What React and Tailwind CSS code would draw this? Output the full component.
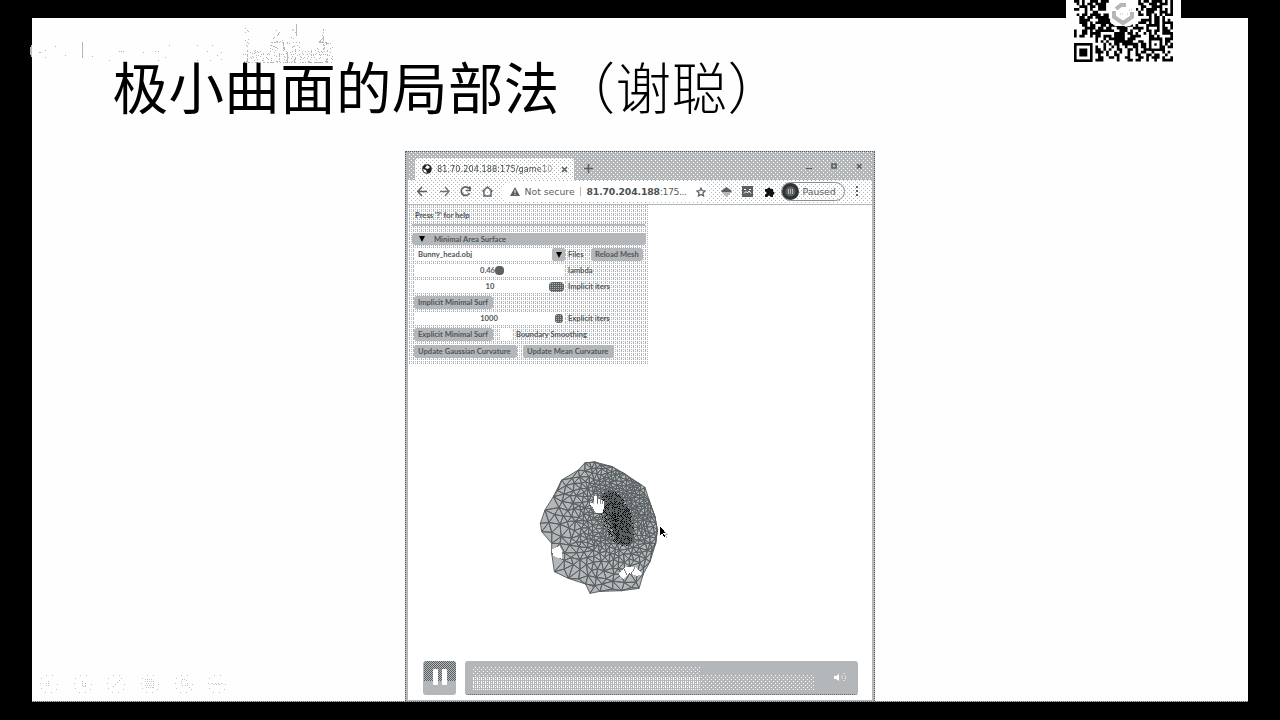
import React from "react";

const LIGHT = "#b3b7ba";
const DARK = "#5b6063";

function rng(seed) {
  let s = seed;
  return () => {
    s = (s * 1664525 + 1013904223) % 4294967296;
    return s / 4294967296;
  };
}

/* ---------- QR code ---------- */
const QR = [
  "##.#..###.###........##.#.##.####.#.#",
  ".#.#.##.####.........##.##..###.###.#",
  "..###.##.###.........##..##..####...#",
  "##..#.#..###..........##.#.####.#.#.#",
  "....#..##.............#.#..###..###.#",
  ".#.##.####.##........#..##.##.#.#.###",
  "..##.##.#####.........#.....#.##.#...",
  "..####...######......##..####.##.#.#.",
  "..###.#.######.##....#..###.#.##.####",
  "...##.##..##.######.##.#...#####.#..#",
  "....####.##.##..####..####.#...#.##.#",
  "#..##.#.#######..###.#..#..##.##.###.",
  "#..##.####.....####.##.#..#.#.#..####",
  "#.##..#.##.###.####..####...##.#....#",
  "........#..#.######.###.....#####.###",
  "#######.#.#.#..#######..##..#...#.##.",
  "#.....#....#.#.##.######.##.#.#.#.#.#",
  "#.###.#.#..#..#.#..#..##.##.#...##.##",
  "#.###.#.##.#.#..##..##.#..#####.##...",
  "#.###.#.###.#..#.#..#..#.##..#...#.#.",
  "#.....#..#..#..##...#..##..##.##..#..",
  "#######..##..##.#..##...##.#.###.#..#",
  "........###.....#...##.##..#..#..####",
];

function QrCode() {
  const u = 99 / 37;
  const cells = [];
  QR.forEach((row, r) => {
    row.split("").forEach((c, x) => {
      if (x < 8 && r > 14) return;
      if (c === "#") cells.push(`M${x * u} ${r * u}h${u}v${u}h${-u}z`);
    });
  });
  return (
    <svg width="99" height="62" viewBox="0 0 99 62" className="block">
      <path d={cells.join("")} fill="#000" />
      <rect x="0" y="42.5" width="21" height="20" fill="#fff" />
      <rect x="1.3" y="44.3" width="16" height="16.4" fill="none" stroke="#000" strokeWidth="2.6" />
      <rect x="5.3" y="48.5" width="8" height="8" fill="#000" />
      <rect x="75" y="38" width="13" height="13" fill="#fff" />
      <rect x="76.2" y="39.2" width="10.6" height="10.6" fill="none" stroke="#000" strokeWidth="2.5" />
      <rect x="80.3" y="43.3" width="2.4" height="2.4" fill="#000" />
      <path d="M37 0H62V22L56 26H41L36 22z" fill="#fff" />
      <path d="M52 5L47 5L42 9" fill="none" stroke={LIGHT} strokeWidth="4" />
      <path d="M40 11v6l9 6 9-6v-5" fill="none" stroke={LIGHT} strokeWidth="4" />
      <path d="M46 14h3M55 10h4M53 14h2" stroke={LIGHT} strokeDasharray="1 1" />
    </svg>
  );
}

/* ---------- Mesh ---------- */
const OUTLINE = [
  [180, 38], [210, 36], [262, 50], [300, 72], [360, 112], [372, 150], [390, 200], [397, 240],
  [392, 280], [375, 335], [355, 372], [342, 415], [290, 422], [225, 424], [195, 430], [182, 402],
  [130, 385], [88, 365], [80, 310], [80, 280], [50, 245], [46, 220], [60, 180], [85, 140], [110, 90], [160, 60],
];

function inside([x, y]) {
  let hit = false;
  for (let i = 0, j = OUTLINE.length - 1; i < OUTLINE.length; j = i++) {
    const [xi, yi] = OUTLINE[i];
    const [xj, yj] = OUTLINE[j];
    if (yi > y !== yj > y && x < ((xj - xi) * (y - yi)) / (yj - yi) + xi) hit = !hit;
  }
  return hit;
}

function circum(a, b, c) {
  const d = 2 * (a[0] * (b[1] - c[1]) + b[0] * (c[1] - a[1]) + c[0] * (a[1] - b[1]));
  const A = a[0] ** 2 + a[1] ** 2, B = b[0] ** 2 + b[1] ** 2, C = c[0] ** 2 + c[1] ** 2;
  const x = (A * (b[1] - c[1]) + B * (c[1] - a[1]) + C * (a[1] - b[1])) / d;
  const y = (A * (c[0] - b[0]) + B * (a[0] - c[0]) + C * (b[0] - a[0])) / d;
  return [x, y, (a[0] - x) ** 2 + (a[1] - y) ** 2];
}

function triangulate(points) {
  const p = [...points, [-2000, -2000], [3000, -2000], [200, 4000]];
  const n = points.length;
  let tris = [{ v: [n, n + 1, n + 2], c: circum(p[n], p[n + 1], p[n + 2]) }];
  for (let i = 0; i < n; i++) {
    const edges = new Map();
    const keep = [];
    for (const t of tris) {
      if ((p[i][0] - t.c[0]) ** 2 + (p[i][1] - t.c[1]) ** 2 < t.c[2]) {
        for (const [a, b] of [[0, 1], [1, 2], [2, 0]]) {
          const e = [t.v[a], t.v[b]].sort((m, k) => m - k);
          const key = e.join();
          if (edges.has(key)) edges.set(key, null);
          else edges.set(key, e);
        }
      } else keep.push(t);
    }
    edges.forEach((e) => {
      if (e) keep.push({ v: [e[0], e[1], i], c: circum(p[e[0]], p[e[1]], p[i]) });
    });
    tris = keep;
  }
  return tris.filter((t) => t.v.every((k) => k < n)).map((t) => t.v.map((k) => p[k]));
}

function buildMesh() {
  const rand = rng(17);
  const pts = OUTLINE.map(([x, y]) => [x + rand() * 0.1, y + rand() * 0.1]);
  for (let k = 0; k < 7000; k++) {
    const q = [45 + rand() * 352, 36 + rand() * 394];
    if (!inside(q)) continue;
    const dist = Math.hypot(q[0] - 290, (q[1] - 185) / 1.25);
    const gap = 6 + dist * 0.045 + Math.max(0, 190 - q[0]) * 0.07 + Math.max(0, q[1] - 270) * 0.05;
    if (pts.every((s) => Math.hypot(s[0] - q[0], s[1] - q[1]) > gap)) pts.push(q);
  }
  return triangulate(pts)
    .filter((t) => inside([(t[0][0] + t[1][0] + t[2][0]) / 3, (t[0][1] + t[1][1] + t[2][1]) / 3]))
    .map((t) => `M${t.map((q) => q.map((z) => z.toFixed(1)).join(" ")).join("L")}Z`)
    .join("");
}

const MESH = buildMesh();

function speckle(seed, count, test, w, h) {
  const rand = rng(seed);
  let d = "";
  for (let i = 0; i < count; i++) {
    const x = Math.floor(rand() * w);
    const y = Math.floor(rand() * h);
    if (test(x, y)) d += `M${x} ${y}h1v1h-1z`;
  }
  return d;
}

const CORE = speckle(
  5, 14000,
  (x, y) => {
    const cx = 91 + (y - 65) * 0.25;
    const r = Math.hypot((x - cx) / 15, (y - 68) / 28);
    return r < 1 && ((x + y) % 2 === 0 || (r < 0.45 && x % 3 === 0));
  },
  150, 155
);

function Mesh() {
  return (
    <svg width="150" height="155" viewBox="0 0 150 155" className="block" shapeRendering="crispEdges">
      <g transform="scale(0.33333)">
        <path d={MESH} fill={LIGHT} stroke={DARK} strokeWidth="3" strokeLinejoin="round" />
        <path d="M80 298L104 288L112 306L110 326L98 324L84 316z" fill="#fff" />
        <path d="M282 372L300 352L330 350L354 372L336 378L314 370L296 388z" fill="#fff" />
        <path d="M296 354L306 374M316 376L330 352M190 404L206 410" stroke={DARK} strokeWidth="2.5" />
      </g>
      <path d="M77 43l9-2 8 4 5 9 6 9 3 14 1 12-4 7-9-1-6-8-5-14-4-12-3-9z" fill={DARK} />
      <path d={CORE} fill="#000" />
      <path
        d="M69 46h2l1 1v6h1v-4h2v1h2v1h2v7l-2 5h-6l-3-5-3-4v-1h2l2 2V47z"
        fill="#fff"
      />
      <path d="M72 50v4M75 50v4M77 51v3" stroke={DARK} strokeWidth="0.7" />
      <path d="M135 77v8l2-2 2 4 1-1-2-3h3z" fill="#000" />
      <path d="M139 81l3 3h-2l2 4" stroke={LIGHT} fill="none" />
    </svg>
  );
}

/* ---------- Slide decorations ---------- */
const MARKS = speckle(
  9, 2600,
  (x, y) => {
    if (y > 23) return (x * 7 + y * 3 + ((x * y) >> 2)) % 4 === 0;
    const peak = Math.min(Math.abs(x - 34), Math.abs(x - 50), Math.abs(x - 81));
    if (x < 6) return x > 1 && (x * 3 + y) % 4 < 1;
    return peak < y / 2.6 && (x * 3 + y * 5 + ((x * y) >> 3)) % 5 === 0;
  },
  91, 37
);

function Watermark() {
  return (
    <svg width="310" height="42" viewBox="0 0 310 42" className="block" shapeRendering="crispEdges">
      <path d="M1 21h1v12h-1zM0 23h1v8h-1z" fill={LIGHT} />
      <path
        d="M9 28h2v1h-2zM15 26h1v1h-1zM15 33h1v1h-1zM25 22h1v1h-1zM35 31h1v1h-1zM52 18h1v16h-1zM62 32h1v1h-1zM79 36h1v1h-1zM89 27h1v1h-1zM91 27h1v1h-1zM93 27h1v1h-1zM113 28h1v1h-1zM125 27h1v1h-1zM128 27h1v1h-1zM128 36h1v1h-1zM135 33h1v1h-1zM139 21h1v1h-1zM167 21h1v1h-1zM167 36h1v1h-1zM177 27h1v1h-1zM180 36h1v1h-1zM182 21h1v1h-1zM187 31h1v1h-1zM191 28h1v1h-1zM191 35h1v1h-1z"
        fill={LIGHT}
      />
      <path d={MARKS} transform="translate(213 2)" fill={LIGHT} />
      <path d="M266 0h1v12h-1zM257 28h1v10h-1z" fill={LIGHT} />
    </svg>
  );
}

function SlideTool({ children }) {
  return (
    <svg width="20" height="20" viewBox="0 0 20 20" className="block" fill="none" stroke={LIGHT} strokeWidth="0.8" shapeRendering="crispEdges">
      <circle cx="10" cy="10" r="9" strokeDasharray="1 4.6" />
      {children}
    </svg>
  );
}

function SlideTools() {
  return (
    <div className="flex gap-[13.7px]">
      <SlideTool><path d="M9.500 7v6M7 9.500h1M7 11.500h1" strokeDasharray="1 1" /></SlideTool>
      <SlideTool><path d="M9.500 7v5M12.500 9v3M10 12.500h3" strokeDasharray="1 1" /></SlideTool>
      <SlideTool><path d="M7 13l9-9" strokeDasharray="1.400 1.400" /></SlideTool>
      <SlideTool><path d="M5 5.500h7M5 7.500h9M6 9.500h6M5 11.500h9M6 13.500h8M13.500 7v8" strokeDasharray="1 1" /></SlideTool>
      <SlideTool><path d="M7 10V6l3-1 3 2v4l3 3M8 11h4" strokeDasharray="1 1.500" /></SlideTool>
      <SlideTool><path d="M5 9.500h10M6 10.500h9" strokeDasharray="1 2" /></SlideTool>
    </div>
  );
}

/* ---------- Browser window ---------- */
function Chip({ className, children }) {
  return (
    <div className={`flex h-[13px] items-center rounded-[3px] bg-[#b3b7ba] pl-[4px] whitespace-nowrap ${className}`}>
      {children}
    </div>
  );
}

function Caret() {
  return <span className="h-0 w-0 border-x-[3.5px] border-t-[6px] border-x-transparent border-t-black" />;
}

function SidePanel() {
  return (
    <div className="h-[159px] w-[241px] bg-white bg-[conic-gradient(at_1px_1px,#b3b7ba_25%,transparent_0),conic-gradient(at_3px_1px,#b3b7ba_25%,transparent_0)] bg-[length:2px_2px,4px_4px] bg-[position:0_0,2px_1px] px-1 font-['Lato',sans-serif] text-[7.6px] leading-[13px] font-bold text-[#4f5457]">
      <div className="h-[21px] border-b-2 border-[#b3b7ba] pt-[4px] pl-[3px]">Press '?' for help</div>
      <div className="mt-[7px] mr-[-1px] flex h-[12px] items-center rounded-[3px] bg-[#b3b7ba] pl-[7px]">
        <Caret />
        <span className="ml-[9px]">Minimal Area Surface</span>
      </div>
      <div className="mt-[3px] flex flex-col gap-[3.1px] pl-[2px]">
        <div className="flex items-center">
          <div className="flex h-[13px] w-[138px] items-center bg-white pl-1">Bunny_head.obj</div>
          <div className="flex h-[13px] w-[13px] items-center justify-center rounded-[2px] bg-[#b3b7ba]">
            <Caret />
          </div>
          <span className="ml-[3px] w-[23px]">Files</span>
          <Chip className="w-[52px]">Reload Mesh</Chip>
        </div>
        <div className="flex items-center">
          <div className="flex h-[13px] w-[151px] items-center bg-white pl-[66px]">
            0.46<span className="h-[9px] w-[9px] rounded-[4px] bg-[#5b6063]" />
          </div>
          <span className="ml-[3px]">lambda</span>
        </div>
        <div className="flex items-center">
          <div className="flex h-[13px] w-[151px] items-center bg-white">
            <span className="w-[135px] pl-[17px] text-center">10</span>
            <span className="h-[10px] w-[15px] rounded-[4px] bg-[conic-gradient(#5b6063_25%,#b3b7ba_0_50%,#5b6063_0)] bg-[length:2px_2px]" />
          </div>
          <span className="ml-[3px]">Implicit iters</span>
        </div>
        <Chip className="w-[79px]">Implicit Minimal Surf</Chip>
        <div className="flex items-center">
          <div className="flex h-[13px] w-[151px] items-center bg-white">
            <span className="w-[141px] pl-[9px] text-center">1000</span>
            <span className="h-[9px] w-[8px] rounded-[3px] bg-[conic-gradient(#5b6063_25%,#b3b7ba_0_50%,#5b6063_0)] bg-[length:2px_2px]" />
          </div>
          <span className="ml-[3px]">Explicit iters</span>
        </div>
        <div className="flex items-center">
          <Chip className="w-[79px]">Explicit Minimal Surf</Chip>
          <span className="ml-[7px] h-[13px] w-[12px] rounded-[3px] bg-white" />
          <span className="ml-[4px]">Boundary Smoothing</span>
        </div>
        <div className="flex gap-[6px]">
          <Chip className="w-[103px]">Update Gaussian Curvature</Chip>
          <Chip className="w-[91px]">Update Mean Curvature</Chip>
        </div>
      </div>
    </div>
  );
}

function Globe() {
  return (
    <svg width="10" height="10" viewBox="0 0 10 10" className="shrink-0">
      <circle cx="5" cy="5" r="4.8" fill="#202325" />
      <path d="M5 1L8 3L6 5L3 4zM1 5L4 6L5 9L2 8z" fill="#fff" />
    </svg>
  );
}

function TabStrip() {
  return (
    <div className="flex h-[28px] bg-[#b3b7ba] bg-[conic-gradient(at_3px_1px,white_25%,transparent_0),conic-gradient(at_3px_1px,white_25%,transparent_0)] bg-[length:4px_4px] bg-[position:0_0,2px_2px] pt-[6px] pl-[7px]">
      <div className="flex h-[22px] w-[159px] items-center rounded-t-[4px] bg-white bg-[conic-gradient(at_3px_1px,#b3b7ba_25%,transparent_0),conic-gradient(at_3px_1px,#b3b7ba_25%,transparent_0)] bg-[length:4px_4px] bg-[position:0_0,2px_2px] pl-[7px] font-['DejaVu_Sans',sans-serif] text-[8.2px] text-[#4b5053]">
        <Globe />
        <span className="ml-[5px] w-[121px] bg-linear-to-r from-[#3f4447] from-82% to-[#c5c8ca] to-98% bg-clip-text tracking-[0.03px] whitespace-nowrap text-transparent">81.70.204.188:175/game10</span>
        <svg width="7" height="7" viewBox="0 0 7 7" className="ml-[3px] shrink-0" stroke={DARK} strokeWidth="1.700"><path d="M1 1l5 5M6 1l-5 5" /></svg>
      </div>
      <svg width="9" height="9" viewBox="0 0 9 9" className="mt-[6px] ml-[10px]" stroke={DARK} strokeWidth="1.600"><path d="M0 4.500h9M4.500 0v9" /></svg>
      <div className="mt-[4px] mr-[9px] ml-auto flex h-[8px] gap-[19px]">
        <svg width="6" height="8" viewBox="0 0 6 8"><path d="M0 6.500h6" stroke={DARK} /></svg>
        <svg width="6" height="8" viewBox="0 0 6 8"><path d="M1 2h4v4H1z" stroke={DARK} strokeWidth="1.600" fill={LIGHT} /></svg>
        <svg width="7" height="8" viewBox="0 0 7 8"><path d="M1 2l4.500 4.500M5.500 2L1 6.500" stroke={DARK} strokeWidth="1.700" /></svg>
      </div>
    </div>
  );
}

function Toolbar() {
  return (
    <div className="flex h-[25px] items-center border-b border-[#b3b7ba] bg-white bg-[conic-gradient(at_3px_1px,#b3b7ba_25%,transparent_0),conic-gradient(at_3px_1px,#b3b7ba_25%,transparent_0)] bg-[length:4px_4px] bg-[position:0_0,2px_2px] pb-px pl-[9px] font-['DejaVu_Sans',sans-serif] text-[9.3px] text-[#5b6063]">
      <div className="flex gap-[10.5px]">
        <svg width="11" height="11" viewBox="0 0 11 11" fill="none" stroke={DARK} strokeWidth="1.500"><path d="M10 5.500H1M5 1L.8 5.500 5 10" /></svg>
        <svg width="11" height="11" viewBox="0 0 11 11" fill="none" stroke="#6f7477" strokeWidth="1.300"><path d="M1 5.500h9M6 1l4 4.500L6 10" /></svg>
        <svg width="11" height="11" viewBox="0 0 11 11" fill="none" stroke={DARK} strokeWidth="1.700"><path d="M9 2.500A4.300 4.300 0 1 0 9.500 7M10 .5v4H6" /></svg>
        <svg width="11" height="11" viewBox="0 0 11 11" fill="none" stroke={DARK} strokeWidth="1.400"><path d="M.5 5.500L5.500 1l5 4.500M2 5v5h7V5" /></svg>
      </div>
      <div className="ml-[8px] flex h-[20px] w-[208px] items-center rounded-full bg-white pl-[9px]">
        <svg width="10" height="9" viewBox="0 0 10 9"><path d="M5 0l5 9H0z" fill={DARK} /><path d="M5 3v3M5 7v1" stroke="#fff" /></svg>
        <span className="ml-[5px] w-[52px] whitespace-nowrap">Not secure</span>
        <span className="ml-[3px] h-[9px] w-px bg-[#b3b7ba]" />
        <span className="ml-[6px] w-[100px] tracking-[-0.15px] whitespace-nowrap"><b className="text-[#4b5053]">81.70.204.188</b><span className="tracking-[-0.45px]">:175...</span></span>
        <svg width="10" height="10" viewBox="0 0 10 10" className="ml-[9px] shrink-0" fill="none" stroke={DARK} strokeWidth="1.200"><path d="M5 1l1.200 2.700 3 .3-2.300 2 .7 3L5 7.500 2.400 9l.7-3L.8 4l3-.3z" /></svg>
      </div>
      <div className="ml-[12px] flex items-center gap-[10.5px]">
        <svg width="11" height="10" viewBox="0 0 11 10"><path d="M5.500 0L11 4l-2 2H2L0 4z" fill={DARK} /><path d="M2 5h7v2L5.500 10 2 7z" fill={LIGHT} /></svg>
        <svg width="11" height="11" viewBox="0 0 11 11"><path d="M0 0h11v11H0z" fill={DARK} /><path d="M2 7.500l2-2 1.500 1.500L7 5l2 2.500M2 3.500h2M7 3.500h2" stroke="#fff" fill="none" /></svg>
        <svg width="11" height="10" viewBox="0 0 11 10"><path d="M1 2h2.500a1.500 1.500 0 0 1 3 0H9v2.500a1.500 1.500 0 0 1 0 3V10H6.500a1.500 1.500 0 0 0-3 0H1V7.500a1.500 1.500 0 0 0 0-3z" fill="#111" /></svg>
      </div>
      <div className="ml-[6px] flex h-[19px] w-[64px] items-center rounded-full border border-[#8c9093]">
        <svg width="17" height="17" viewBox="0 0 17 17" className="shrink-0"><circle cx="8.500" cy="8.500" r="8.500" fill="#303436" /><circle cx="8.500" cy="8.500" r="5" fill={DARK} /><path d="M6.500 6v5M8.500 6v5M10.500 6v5" stroke={LIGHT} /></svg>
        <span className="ml-[4px]">Paused</span>
      </div>
      <svg width="3" height="11" viewBox="0 0 3 11" className="ml-[11px]" fill={DARK}><path d="M0 0h2v2H0zM0 4h2v2H0zM0 8h2v2H0z" /></svg>
    </div>
  );
}

function PlayerBar() {
  return (
    <div className="flex gap-[9px] pl-[15px]">
      <div className="flex h-[34px] w-[33px] flex-col items-center rounded-[3px] bg-[#b3b7ba]">
        <div className="flex h-[20px] w-[32px] justify-center gap-[4px] rounded-t-[3px] bg-[conic-gradient(#5b6063_25%,#b3b7ba_0_50%,#5b6063_0_75%,#b3b7ba_0)] bg-[length:2px_2px] pt-[8px]">
          <span className="h-[16px] w-[5px] rounded-[1px] bg-white" />
          <span className="h-[16px] w-[5px] rounded-[1px] bg-white" />
        </div>
      </div>
      <div className="flex h-[34px] w-[393px] rounded-[3px] border-b border-dotted border-[#5b6063] bg-[#b3b7ba] pt-[6px] pl-[7px]">
        <div className="h-[23px] w-[228px]">
          <div className="h-[10px] bg-[conic-gradient(at_3px_1px,white_25%,transparent_0),conic-gradient(at_3px_1px,white_25%,transparent_0)] bg-[length:4px_4px] bg-[position:0_0,2px_2px]" />
          <div className="h-[13px] bg-[conic-gradient(at_1px_1px,white_25%,transparent_0),conic-gradient(at_3px_1px,white_25%,transparent_0)] bg-[length:2px_2px,4px_4px] bg-[position:0_0,2px_1px]" />
        </div>
        <div className="mt-[8px] h-[15px] w-[115px] bg-[conic-gradient(at_3px_1px,white_25%,transparent_0),conic-gradient(at_3px_1px,white_25%,transparent_0)] bg-[length:4px_4px] bg-[position:0_0,2px_2px]" />
        <svg width="14" height="11" viewBox="0 0 14 11" className="mt-[5px] ml-[19px]">
          <path d="M0 4h2l3-2v7L2 7H0z" fill="#fff" />
          <path d="M8 3.500v4M10 1v2M11.500 4v3M10 8v2" stroke="#fff" fill="none" strokeDasharray="1 1" />
        </svg>
      </div>
    </div>
  );
}

function BrowserWindow() {
  return (
    <div className="flex h-[550px] w-[470px] border-x border-t border-dotted border-[#5b6063] bg-[#b3b7ba] px-[2px]">
      <div className="flex w-[464px] flex-col bg-white">
        <TabStrip />
        <Toolbar />
        <SidePanel />
        <div className="mt-[86px] ml-[117px]"><Mesh /></div>
        <div className="mt-[56px]"><PlayerBar /></div>
        <div className="mt-auto h-px bg-[#b3b7ba]" />
      </div>
    </div>
  );
}

export default function App() {
  return (
    <div className="relative h-[720px] w-[1280px] overflow-hidden bg-black px-8 pt-[18px]">
      <div className="flex h-[683px] flex-col bg-[#fefefe]">
        <h1 className="h-[133px] pt-[27px] pl-[80.5px] font-['Noto_Sans_CJK_SC',sans-serif] text-[55.5px] leading-[80px] tracking-[0.4px] whitespace-nowrap text-black">
          <span>极小曲面的局部法</span>
          <span className="font-light">（谢聪）</span>
        </h1>
        <div className="flex justify-center"><BrowserWindow /></div>
      </div>
      <div className="h-px bg-[conic-gradient(#5b6063_50%,#b3b7ba_0)] bg-[length:2px_1px]" />
      <div className="absolute top-0 left-[1066px] h-[64px] w-[115px] bg-white pl-[8px]"><QrCode /></div>
      <div className="absolute top-[24px] left-[30px]"><Watermark /></div>
      <div className="absolute top-[674px] left-[39px]"><SlideTools /></div>
    </div>
  );
}
